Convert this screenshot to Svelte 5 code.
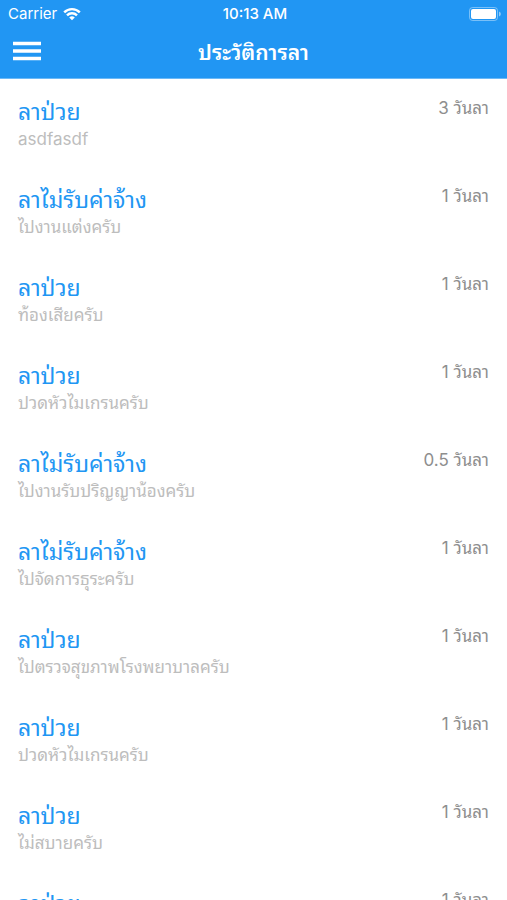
<script lang="ts">
	interface Leave {
		id: number;
		type: string;
		reason: string;
		days: number;
	}

	const leaves: Leave[] = [
		{ id: 1, type: 'ลาป่วย', reason: 'asdfasdf', days: 3 },
		{ id: 2, type: 'ลาไม่รับค่าจ้าง', reason: 'ไปงานแต่งครับ', days: 1 },
		{ id: 3, type: 'ลาป่วย', reason: 'ท้องเสียครับ', days: 1 },
		{ id: 4, type: 'ลาป่วย', reason: 'ปวดหัวไมเกรนครับ', days: 1 },
		{ id: 5, type: 'ลาไม่รับค่าจ้าง', reason: 'ไปงานรับปริญญาน้องครับ', days: 0.5 },
		{ id: 6, type: 'ลาไม่รับค่าจ้าง', reason: 'ไปจัดการธุระครับ', days: 1 },
		{ id: 7, type: 'ลาป่วย', reason: 'ไปตรวจสุขภาพโรงพยาบาลครับ', days: 1 },
		{ id: 8, type: 'ลาป่วย', reason: 'ปวดหัวไมเกรนครับ', days: 1 },
		{ id: 9, type: 'ลาป่วย', reason: 'ไม่สบายครับ', days: 1 },
		{ id: 10, type: 'ลาป่วย', reason: 'ไม่สบายครับ', days: 1 }
	];
</script>

<div class="screen">
	<header>
		<div class="status">
			<span class="carrier">
				Carrier
				<svg width="18" height="14" viewBox="0 0 18 14" aria-hidden="true">
					<path d="M1.2 5.4a11 11 0 0 1 15.6 0M4 8.3a7 7 0 0 1 10 0" fill="none" stroke="#fff" stroke-width="2.4" />
					<path d="M9 13.3l-2.8-2.8a4 4 0 0 1 5.6 0z" fill="#fff" />
				</svg>
			</span>
			<span class="time">10:13 AM</span>
			<svg class="battery" width="33" height="14" viewBox="0 0 33 14" aria-hidden="true">
				<rect x="0.5" y="0.5" width="28" height="13" rx="3" fill="none" stroke="#fff" stroke-opacity="0.4" />
				<rect x="2" y="2" width="25" height="10" rx="2" fill="#fff" />
				<path d="M30 4.5a2.6 2.6 0 0 1 0 5z" fill="#fff" fill-opacity="0.5" />
			</svg>
		</div>
		<div class="bar">
			<button type="button" aria-label="เมนู">
				<svg width="28" height="20" viewBox="0 0 28 20" aria-hidden="true">
					<path d="M0 2.5h28M0 10h28M0 17.5h28" stroke="#fff" stroke-width="3.4" />
				</svg>
			</button>
			<h1>ประวัติการลา</h1>
		</div>
	</header>

	<ul>
		{#each leaves as leave (leave.id)}
			<li>
				<div>
					<h2>{leave.type}</h2>
					<p>{leave.reason}</p>
				</div>
				<span class="days">{leave.days} วันลา</span>
			</li>
		{/each}
	</ul>
</div>

<style>
	:global(body) {
		margin: 0;
		background: #fff;
	}
	.screen {
		height: 100vh;
		display: flex;
		flex-direction: column;
		overflow: hidden;
		font-family: Inter, Thonburi, 'Noto Sans Thai Looped', Loma, Garuda, sans-serif;
	}
	header {
		flex: none;
		background: #2196f3;
		color: #fff;
	}
	.status {
		display: grid;
		grid-template-columns: 1fr auto 1fr;
		align-items: center;
		height: 27px;
		padding: 0 5px 0 8px;
		font-size: 15px;
	}
	.carrier {
		display: flex;
		align-items: center;
		gap: 6px;
	}
	.time {
		font-weight: 500;
	}
	.battery {
		justify-self: end;
	}
	.bar {
		display: grid;
		grid-template-columns: 28px 1fr 28px;
		align-items: center;
		height: 51px;
		padding: 0 13px;
		border-bottom: 1px solid #6cb9f7;
	}
	button {
		display: flex;
		padding: 0;
		border: 0;
		background: none;
		cursor: pointer;
	}
	button svg {
		margin-bottom: 4px;
	}
	h1 {
		margin: 0;
		text-align: center;
		font-size: 21px;
		line-height: 28px;
		font-weight: 600;
	}
	ul {
		flex: 1;
		min-height: 0;
		margin: 0;
		padding: 15px 18px 0;
		overflow: hidden;
		list-style: none;
	}
	li {
		display: flex;
		justify-content: space-between;
		height: 88px;
	}
	h2 {
		margin: 0;
		font-size: 23px;
		line-height: 36px;
		font-weight: 400;
		color: #2196f3;
	}
	p {
		margin: 0;
		font-size: 17px;
		line-height: 18px;
		color: #bdbdbd;
	}
	.days {
		font-size: 17px;
		line-height: 28px;
		color: #8e8e8e;
	}
</style>
